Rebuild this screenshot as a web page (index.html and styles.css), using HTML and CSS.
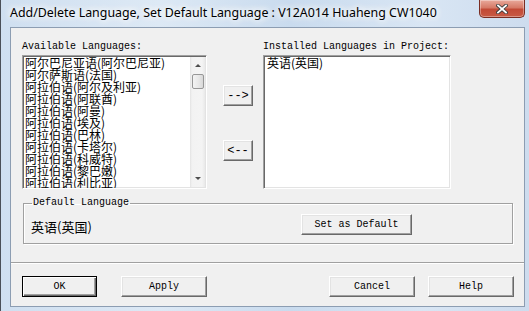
FILE: index.html
```html
<!DOCTYPE html>
<html lang="en">
<head>
    <meta charset="UTF-8">
    <title>Add/Delete Language</title>
    <link rel="stylesheet" href="styles.css">
</head>
<body>
    <div class="window">
        <div class="titlebar">
            <span class="title">Add/Delete Language, Set Default Language : V12A014 Huaheng CW1040</span>
            <button class="close" type="button">
                <svg width="12" height="10" viewBox="0 0 12 10">
                    <path d="M2 1.5 L10 8.5 M10 1.5 L2 8.5" stroke="#3c3c3c" stroke-width="3.6" stroke-linecap="square"/>
                    <path d="M2 1.5 L10 8.5 M10 1.5 L2 8.5" stroke="#ffffff" stroke-width="1.8" stroke-linecap="square"/>
                </svg>
            </button>
        </div>

        <div class="client">
            <div class="lists">
                <div class="list-col">
                    <div class="label">Available Languages:</div>
                    <div class="listbox available">
                        <ul class="items">
                            <li>阿尔巴尼亚语(阿尔巴尼亚)</li>
                            <li>阿尔萨斯语(法国)</li>
                            <li>阿拉伯语(阿尔及利亚)</li>
                            <li>阿拉伯语(阿联酋)</li>
                            <li>阿拉伯语(阿曼)</li>
                            <li>阿拉伯语(埃及)</li>
                            <li>阿拉伯语(巴林)</li>
                            <li>阿拉伯语(卡塔尔)</li>
                            <li>阿拉伯语(科威特)</li>
                            <li>阿拉伯语(黎巴嫩)</li>
                            <li>阿拉伯语(利比亚)</li>
                        </ul>
                        <div class="scrollbar">
                            <span class="arrow up"></span>
                            <span class="thumb"></span>
                            <span class="track"></span>
                            <span class="arrow down"></span>
                        </div>
                    </div>
                </div>

                <div class="move-col">
                    <button class="btn move" type="button">--&gt;</button>
                    <button class="btn move back" type="button">&lt;--</button>
                </div>

                <div class="list-col installed-col">
                    <div class="label">Installed Languages in Project:</div>
                    <div class="listbox installed">
                        <ul class="items">
                            <li>英语(英国)</li>
                        </ul>
                    </div>
                </div>
            </div>

            <fieldset class="group">
                <legend>Default Language</legend>
                <div class="group-row">
                    <span class="default-lang">英语(英国)</span>
                    <button class="btn set-default" type="button">Set as Default</button>
                </div>
            </fieldset>

            <div class="separator"></div>

            <div class="actions">
                <button class="btn ok" type="button">OK</button>
                <button class="btn apply" type="button">Apply</button>
                <button class="btn cancel" type="button">Cancel</button>
                <button class="btn help" type="button">Help</button>
            </div>
        </div>
    </div>
</body>
</html>
```

FILE: styles.css
```css
html, body {
    margin: 0;
    padding: 0;
}
body {
    width: 529px;
    height: 311px;
    overflow: hidden;
    background: linear-gradient(to right, #cfdff0 0%, #dde9f5 30%, #c9dbee 55%, #d9e6f4 80%, #cddcee 100%);
}
.window {
    height: 311px;
    padding-left: 9px;
    border-left: 1px solid #4a4f57;
    box-sizing: border-box;
}

/* Title bar */
.titlebar {
    height: 27px;
    display: flex;
    align-items: flex-start;
    justify-content: space-between;
}
.title {
    padding-top: 4px;
    font-family: "Noto Sans", "Open Sans", sans-serif;
    font-size: 12.4px;
    color: #000;
    text-shadow: 0 0 6px #fff, 0 0 8px #fff, 0 0 10px #fff;
    white-space: nowrap;
}
.close {
    width: 46px;
    height: 18px;
    margin-right: 4px;
    padding: 0;
    display: flex;
    align-items: center;
    justify-content: center;
    border: 1px solid #7a2d22;
    border-top: none;
    border-radius: 0 0 5px 5px;
    background: linear-gradient(to bottom, #e9a99b 0%, #d67a67 45%, #c24a36 55%, #c85a44 100%);
    box-shadow: inset 0 0 0 1px rgba(255, 255, 255, 0.35);
}

/* Client area */
.client {
    width: 515px;
    height: 280px;
    box-sizing: border-box;
    padding: 12px 11px 0 11px;
    background-color: #f0f0f0;
    border: 1px solid #8c9db2;
    font-family: "Liberation Mono", monospace;
    font-size: 10px;
    color: #000;
}
.lists {
    display: flex;
}
.label {
    height: 13px;
    line-height: 13px;
    margin-bottom: 2px;
    white-space: nowrap;
}
.listbox {
    height: 134px;
    box-sizing: border-box;
    background-color: #fff;
    border-top: 1px solid #a0a0a0;
    border-left: 1px solid #a0a0a0;
    border-right: 1px solid #fff;
    border-bottom: 1px solid #fff;
    box-shadow: inset 1px 1px 0 #696969, inset -1px -1px 0 #e3e3e3;
    display: flex;
    overflow: hidden;
}
.available {
    width: 185px;
}
.installed {
    width: 188px;
}
.items {
    list-style: none;
    margin: 0;
    padding: 1px 0 0 2px;
    flex: 1;
    font-family: "Noto Sans CJK SC", sans-serif;
    font-size: 12px;
    line-height: 12px;
    white-space: nowrap;
}
.installed .items {
    padding-left: 3px;
}

/* Scrollbar */
.scrollbar {
    width: 15px;
    margin: 1px 1px 1px 0;
    display: flex;
    flex-direction: column;
    align-items: center;
    background: linear-gradient(to right, #e3e3e3 0, #f2f2f2 2px, #f4f4f4 12px, #e9e9e9 15px);
}
.arrow {
    height: 17px;
    width: 15px;
    display: flex;
    align-items: center;
    justify-content: center;
}
.arrow::after {
    content: "";
    width: 0;
    height: 0;
    border-left: 3px solid transparent;
    border-right: 3px solid transparent;
}
.arrow.up::after {
    border-bottom: 3px solid #4e4e4e;
}
.arrow.down::after {
    border-top: 3px solid #4e4e4e;
}
.thumb {
    width: 12px;
    height: 15px;
    box-sizing: border-box;
    border: 1px solid #979797;
    border-radius: 2px;
    background: linear-gradient(to right, #f3f3f3, #e6e6e6 60%, #d8d8d8);
}
.track {
    flex: 1;
}

/* Move buttons */
.move-col {
    width: 30px;
    margin-left: 16px;
    margin-right: 10px;
    padding-top: 45px;
    display: flex;
    flex-direction: column;
}
.btn {
    height: 21px;
    padding: 0;
    box-sizing: border-box;
    background-color: #f0f0f0;
    border-top: 1px solid #fff;
    border-left: 1px solid #fff;
    border-right: 1px solid #696969;
    border-bottom: 1px solid #696969;
    box-shadow: inset -1px -1px 0 #a0a0a0, inset 1px 1px 0 #e3e3e3;
    font-family: "Liberation Mono", monospace;
    font-size: 10px;
    color: #000;
    cursor: pointer;
}
.move {
    width: 30px;
    font-size: 12px;
}
.move.back {
    margin-top: 34px;
}

/* Default language group */
.group {
    margin: 9px 0 0 1px;
    padding: 5px 100px 7px 7px;
    border: 1px solid #a0a0a0;
    box-shadow: 1px 1px 0 #fff, inset 1px 1px 0 #fff;
    min-width: 0;
}
.group legend {
    margin-left: 1px;
    padding: 0 1px;
    line-height: 10px;
    font-size: 10px;
}
.group-row {
    display: flex;
    align-items: center;
}
.default-lang {
    font-family: "Noto Sans CJK SC", sans-serif;
    font-size: 13px;
    padding-top: 4px;
}
.set-default {
    width: 111px;
    margin-left: auto;
}

.separator {
    margin: 18px -11px 0 -11px;
    height: 1px;
    background-color: #a0a0a0;
    border-bottom: 1px solid #fff;
}

/* Bottom buttons */
.actions {
    display: flex;
    margin-top: 12px;
}
.ok {
    width: 75px;
    border: 1px solid #000;
    box-shadow: inset 1px 1px 0 #fff, inset -1px -1px 0 #696969, inset -2px -2px 0 #a0a0a0;
}
.apply {
    width: 86px;
    margin-left: 24px;
}
.cancel {
    width: 86px;
    margin-left: auto;
}
.help {
    width: 86px;
    margin-left: 13px;
    margin-right: -1px;
}
```
